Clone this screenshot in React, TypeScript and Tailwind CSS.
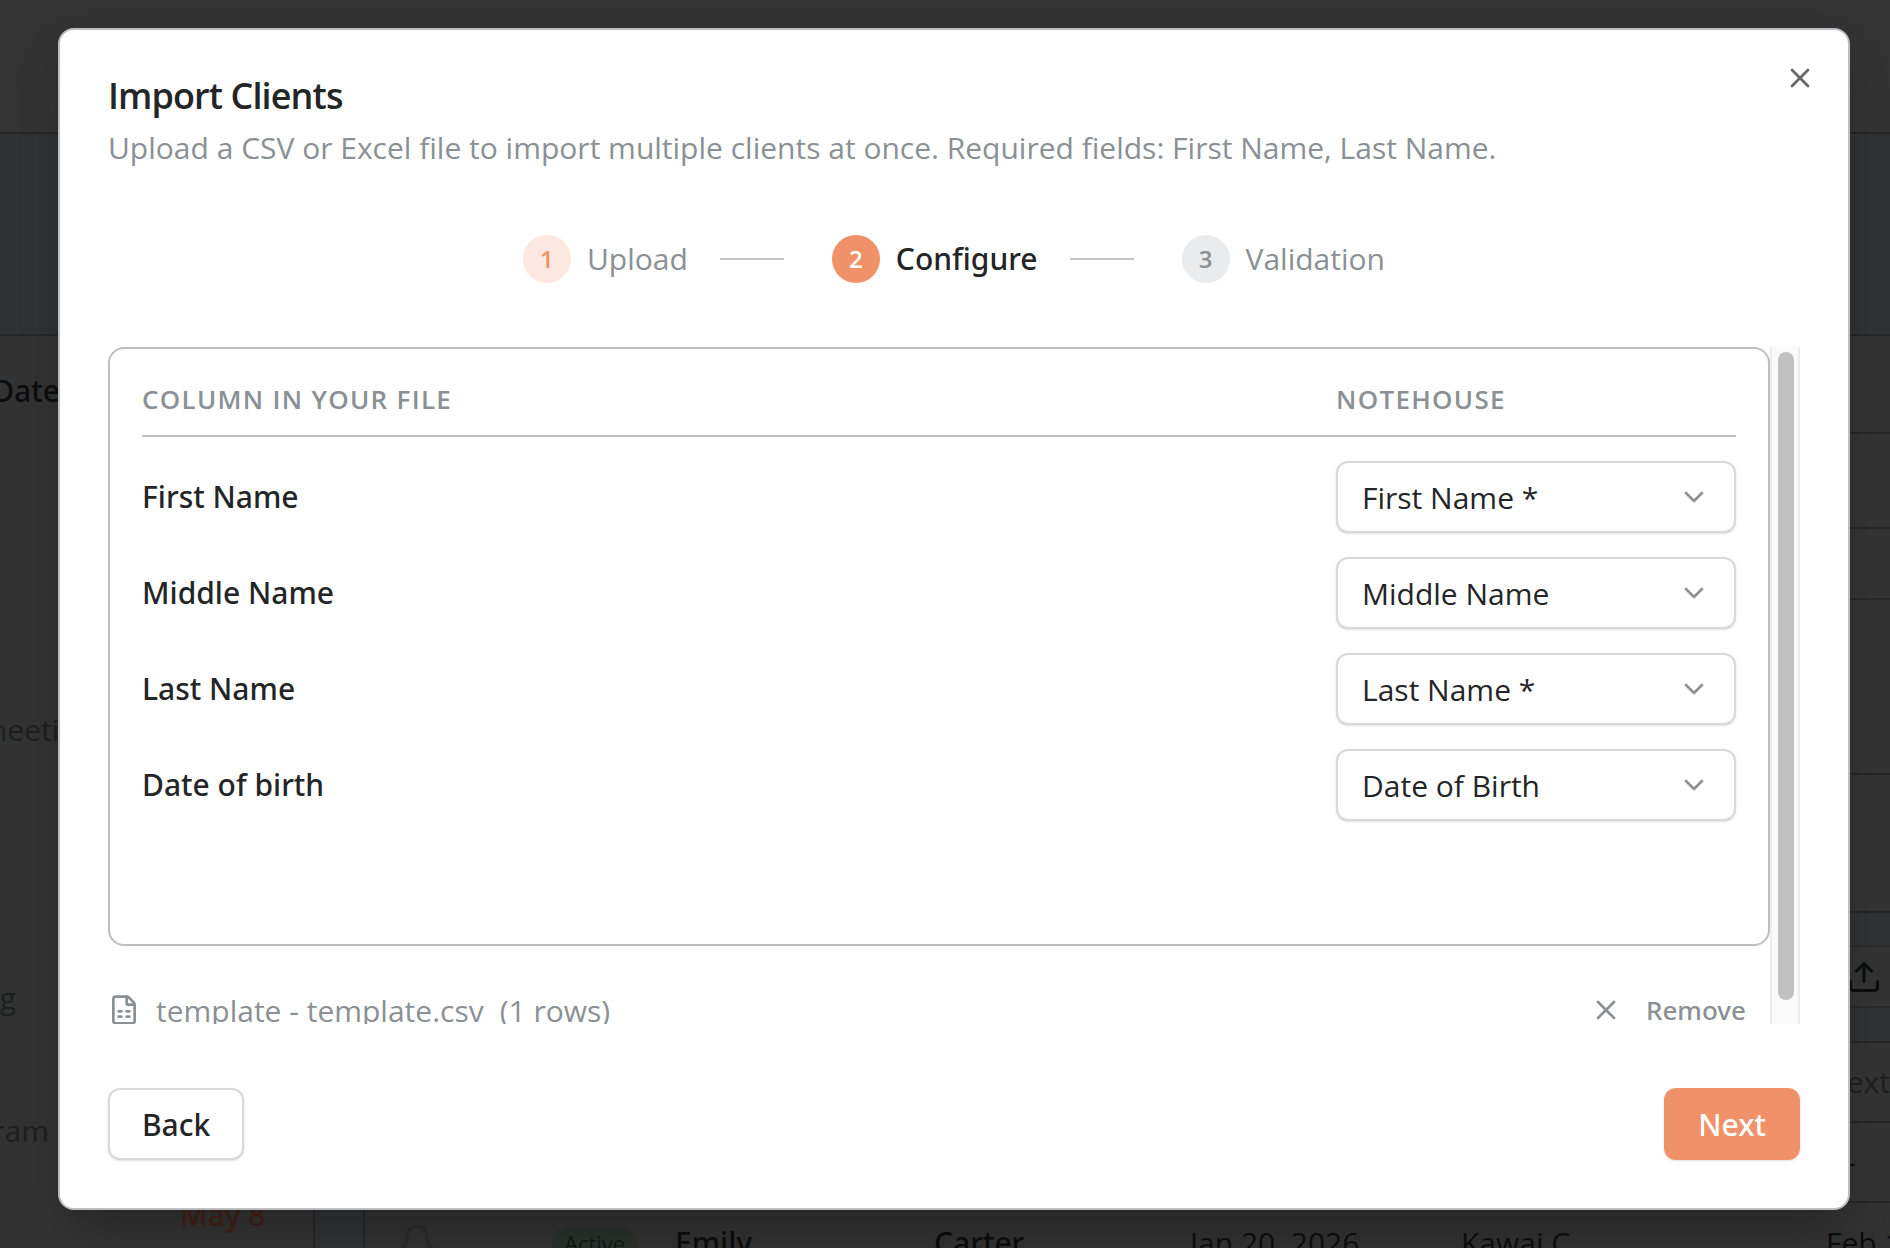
import { Bell, ChevronDown, FileSpreadsheet, Upload, X } from "lucide-react";
import { FC, useState } from "react";

interface Mapping {
	id: string;
	column: string;
	field: string;
}

interface StepProps {
	index: number;
	label: string;
	current: number;
}

const FIELDS = ["First Name *", "Middle Name", "Last Name *", "Date of Birth"];

const STEPS = ["Upload", "Configure", "Validation"];

const INITIAL_MAPPINGS: Mapping[] = [
	{ id: "first-name", column: "First Name", field: "First Name *" },
	{ id: "middle-name", column: "Middle Name", field: "Middle Name" },
	{ id: "last-name", column: "Last Name", field: "Last Name *" },
	{ id: "date-of-birth", column: "Date of birth", field: "Date of Birth" },
];

const circleClass = (index: number, current: number) => {
	if (index < current) return "bg-[#fce8e0] text-[#f0916a]";
	if (index === current) return "bg-[#f0916a] text-white";
	return "bg-[#e9ebec] text-[#8a9094]";
};

const Step: FC<StepProps> = ({ index, label, current }) => (
	<li className="flex items-center">
		{index > 1 && <span className="ml-8 mr-12 h-0.5 w-16 bg-[#c4c4c6]"></span>}
		<span
			className={`flex size-12 items-center justify-center rounded-full text-2xl font-semibold ${circleClass(index, current)}`}
		>
			{index}
		</span>
		<span
			className={`ml-4 text-[30px] leading-10 ${index === current ? "font-['Noto_Sans','Open_Sans',sans-serif] font-medium text-[#232527]" : "text-[#8a9094]"}`}
		>
			{label}
		</span>
	</li>
);

// Dimmed clients page behind the dialog
const Backdrop: FC = () => (
	<div
		className="flex h-screen flex-col overflow-hidden bg-[#2f3133] text-[30px] leading-10 whitespace-nowrap text-[#0c0d0e]"
		aria-hidden="true"
	>
		<div className="h-[134px] shrink-0 border-b-2 border-[#262626] bg-[#333333]"></div>
		<div className="flex min-h-0 flex-1 pt-[200px]">
			<div className="w-[315px] shrink-0 border-t-2 border-r-2 border-[#262626] bg-[#323232] text-[#1c1f20]">
				<div className="flex h-[110px] w-[60px] items-center justify-end font-['Noto_Sans','Open_Sans',sans-serif] font-medium text-[#0c0d0e]">
					Date
				</div>
				<div className="flex h-[304px] w-[94px] items-end justify-end">meeting</div>
				<div className="flex h-[268px] w-4 items-end justify-end">meeting</div>
				<div className="flex h-[133px] w-[71px] items-end justify-end">Program s</div>
				<div className="flex h-[84px] items-end pl-[180px] font-['Noto_Sans','Open_Sans',sans-serif] font-medium text-[#3f2015]">
					May 8
				</div>
			</div>
			<div className="w-12 shrink-0"></div>
			<div className="min-w-0 flex-1 border-l-2 border-[#262626]">
				<div className="h-[100px] border-y-2 border-[#262626] bg-[#333333]"></div>
				<div className="h-[95px] border-b-2 border-[#282828] bg-[#333333]"></div>
				<div className="h-[71px] border-b-2 border-[#282828] bg-[#333333]"></div>
				<div className="h-[175px] border-b-2 border-[#262626] bg-[#333333]"></div>
				<div className="h-[138px] border-b-2 border-[#262626] bg-[#333333]"></div>
				<div className="h-[34px] border-b-2 border-[#2b2b2b]"></div>
				<div className="flex h-[61px] items-center justify-end border-b-2 border-[#2b2b2b] bg-[#333333] pr-2">
					<Upload className="size-9" strokeWidth={2} />
				</div>
				<div className="h-[35px] border-b-2 border-[#262626]"></div>
				<div className="flex h-[80px] items-center justify-end border-b-2 border-[#262626] bg-[#333333] text-[#1c1f20]">Next</div>
				<div className="flex h-[80px] items-center justify-end border-b-2 border-[#262626] bg-[#333333] pr-[34px]">-</div>
				<div className="flex h-20 items-center bg-[#313131]">
					<div className="flex w-[187px] shrink-0 pl-8">
						<Bell className="size-10 text-[#2a2a2a]" strokeWidth={2} />
					</div>
					<div className="flex w-[123px] shrink-0">
						<span className="rounded-full bg-[#29302b] px-3 text-[22px] leading-8 text-[#0f1913]">Active</span>
					</div>
					<div className="w-[259px] shrink-0 font-['Noto_Sans','Open_Sans',sans-serif] font-medium">Emily</div>
					<div className="w-[256px] shrink-0 font-['Noto_Sans','Open_Sans',sans-serif] font-medium">Carter</div>
					<div className="w-[271px] shrink-0">Jan 20, 2026</div>
					<div className="w-[365px] shrink-0">Kawai C.</div>
					<div>Feb 17</div>
				</div>
			</div>
		</div>
	</div>
);

const App: FC = () => {
	const [mappings, setMappings] = useState<Mapping[]>(INITIAL_MAPPINGS);

	const changeField = (id: string, field: string) => {
		setMappings(mappings.map(mapping => (mapping.id === id ? { ...mapping, field } : mapping)));
	};

	return (
		<div className="relative h-screen overflow-hidden font-['Open_Sans','Noto_Sans',sans-serif]">
			<Backdrop />
			<div className="absolute inset-0 flex pt-7 pr-10 pb-[38px] pl-[58px]">
				<div
					role="dialog"
					aria-labelledby="import-title"
					className="relative flex min-w-0 flex-1 flex-col rounded-2xl border-2 border-[#bdbec2] bg-white p-12 text-[#232527] shadow-2xl"
				>
					<h1 id="import-title" className="text-[36px] leading-9 font-semibold tracking-tight">Import Clients</h1>
					<p className="mt-3.5 text-[30px] leading-10 text-[#8a9094]">
						Upload a CSV or Excel file to import multiple clients at once. Required fields: First Name, Last Name.
					</p>
					<button type="button" aria-label="Close" className="absolute top-8 right-8 text-[#666666]">
						<X className="size-8" strokeWidth={2} />
					</button>

					<ol className="mt-[67px] flex items-center justify-center">
						{STEPS.map((label, i) => (
							<Step key={label} index={i + 1} label={label} current={2} />
						))}
					</ol>

					<div className="mt-16 flex min-h-0 flex-1">
						<div className="min-w-0 flex-1 overflow-hidden">
							<div className="h-[599px] rounded-2xl border-2 border-[#bdbec2] px-8 pt-[30px]">
								<div className="flex border-b-2 border-[#bdbec2] pb-4 text-[26px] leading-10 font-semibold tracking-wider text-[#8a9094]">
									<span className="flex-1">COLUMN IN YOUR FILE</span>
									<span className="w-[400px]">NOTEHOUSE</span>
								</div>
								<div className="flex flex-col gap-6 pt-6">
									{mappings.map(mapping => (
										<div key={mapping.id} className="flex items-center">
											<label
												htmlFor={mapping.id}
												className="flex-1 font-['Noto_Sans','Open_Sans',sans-serif] text-[30px] leading-10 font-medium"
											>
												{mapping.column}
											</label>
											<div className="relative w-[400px]">
												<select
													id={mapping.id}
													value={mapping.field}
													onChange={e => changeField(mapping.id, e.target.value)}
													className="block h-[72px] w-full appearance-none rounded-xl border-2 border-[#d9d9db] bg-white px-6 text-[30px] shadow-sm"
												>
													{FIELDS.map(field => (
														<option key={field}>{field}</option>
													))}
												</select>
												<ChevronDown className="pointer-events-none absolute top-5 right-[26px] size-8 text-[#919293]" strokeWidth={2} />
											</div>
										</div>
									))}
								</div>
							</div>
							<div className="mt-8 flex h-16 items-center text-[30px] text-[#8a9094]">
								<FileSpreadsheet className="size-8" strokeWidth={2} />
								<span className="ml-4">template - template.csv</span>
								<span className="ml-4 flex-1">(1 rows)</span>
								<button
									type="button"
									className="flex items-center gap-6 pr-6 font-['Noto_Sans','Open_Sans',sans-serif] text-[26px] font-medium"
								>
									<X className="size-8" strokeWidth={2} />
									Remove
								</button>
							</div>
						</div>
						<div className="w-[30px] border-x-2 border-[#ececec] bg-[#fafafa] pt-[5px] pl-1.5">
							<div className="h-[648px] w-4 rounded-full bg-[#c1c1c1]"></div>
						</div>
					</div>

					<div className="mt-16 flex justify-between font-['Noto_Sans','Open_Sans',sans-serif] text-[30px] font-medium">
						<button type="button" className="h-[72px] rounded-xl border-2 border-[#d9d9db] bg-white px-8 shadow-sm">
							Back
						</button>
						<button type="button" className="h-[72px] rounded-xl border-2 border-[#f0916a] bg-[#f0916a] px-8 text-white shadow-sm">
							Next
						</button>
					</div>
				</div>
			</div>
		</div>
	);
};

export default App;
